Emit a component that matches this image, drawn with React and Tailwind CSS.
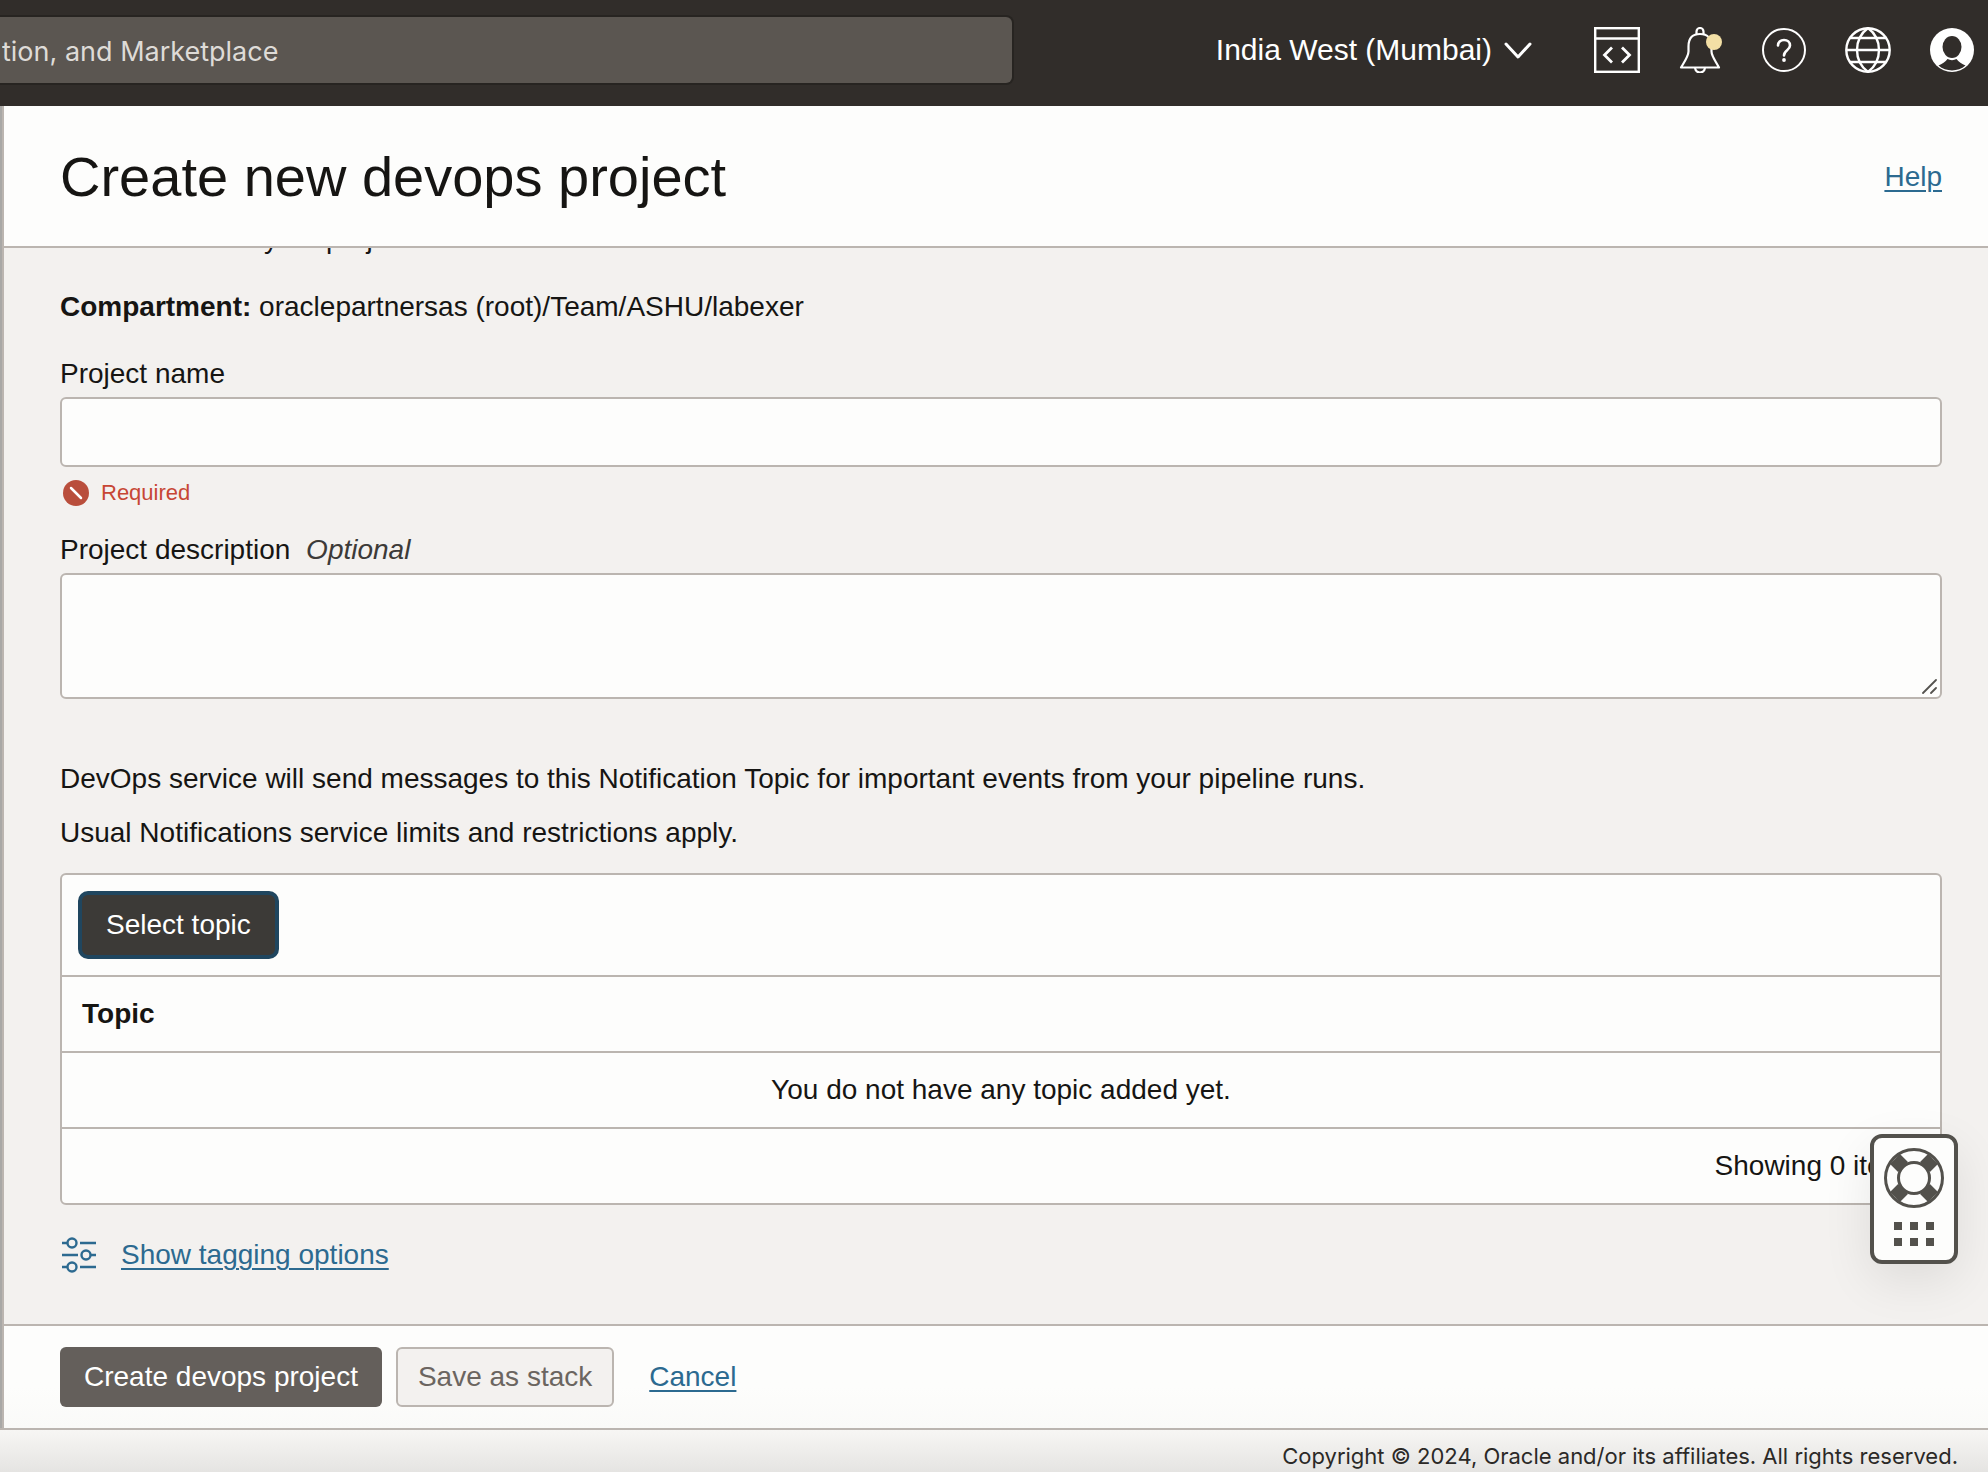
import React from "react";

function CodeIcon() {
  return (
    <svg width="46" height="46" viewBox="0 0 46 46" fill="none" stroke="#fff" strokeWidth="2.4">
      <rect x="1.2" y="1.2" width="43.6" height="43.6" />
      <path d="M1 11.5h44" />
      <path d="M18 20.5l-7.5 7.5 7.5 7.5M28 20.5l7.5 7.5-7.5 7.5" strokeWidth="2.8" />
    </svg>
  );
}

function BellIcon() {
  return (
    <svg width="44" height="46" viewBox="0 0 44 46" fill="none" stroke="#fff" strokeWidth="2.2" strokeLinejoin="round">
      <path d="M9.5 19.5C9.5 10.5 14 7 21 7s11.5 3.5 11.5 12.5v5c0 4.500 4 9.500 7.500 16H2c4-6.500 7.500-11.500 7.500-16z" />
      <path d="M17.5 7V4.500a3.500 3.500 0 0 1 7 0V7M16 41c.5 3 2.500 4.500 5 4.500s4.500-1.500 5-4.500" />
      <circle cx="35" cy="15" r="8" fill="#f3dfa5" stroke="none" />
    </svg>
  );
}

function HelpIcon() {
  return (
    <svg width="44" height="44" viewBox="0 0 44 44" fill="none" stroke="#fff" strokeWidth="2">
      <circle cx="22" cy="22" r="21" />
      <path d="M16 17.5c0-3.500 2.500-5.500 6-5.500s6 2 6 5.500c0 5-6 4.500-6 10" strokeWidth="2.6" strokeLinecap="round" />
      <circle cx="22" cy="32" r="1.9" fill="#fff" stroke="none" />
    </svg>
  );
}

function GlobeIcon() {
  return (
    <svg width="46" height="46" viewBox="0 0 46 46" fill="none" stroke="#fff" strokeWidth="2.4">
      <circle cx="23" cy="23" r="21.7" />
      <path d="M4.500 11h37M1 23h44M4.500 35h37" />
      <path d="M23 1C15 7 12 15 12 23s3 16 11 22c8-6 11-14 11-22S31 7 23 1z" />
    </svg>
  );
}

function UserIcon() {
  return (
    <svg width="44" height="44" viewBox="0 0 44 44">
      <circle cx="22" cy="22" r="22" fill="#fff" />
      <ellipse cx="22" cy="19" rx="9.5" ry="11" fill="#312d2a" />
      <path d="M8.500 37.500c3.500-1.500 7-3.500 9-6.500 2.500 1.500 6.500 1.500 9 0 2 3 5.500 5 9 6.500-7.500 6.500-19.500 6.500-27 0z" fill="#312d2a" />
    </svg>
  );
}

function SlidersIcon() {
  return (
    <svg width="36" height="36" viewBox="0 0 36 36" fill="none" stroke="#2c6a90" strokeWidth="2.4">
      <path d="M1 6h5M19 6h16M1 18h16M30 18h5M1 30h5M19 30h16" />
      <circle cx="11" cy="6" r="4.5" />
      <circle cx="25" cy="18" r="4.5" />
      <circle cx="11" cy="30" r="4.5" />
    </svg>
  );
}

function LifeRing() {
  return (
    <svg width="60" height="60" viewBox="0 0 60 60" fill="none" stroke="#53514c">
      <circle cx="30" cy="30" r="28.5" strokeWidth="3" />
      <circle cx="30" cy="30" r="15.5" strokeWidth="3" />
      <path d="M19 19l-8-8M41 19l8-8M19 41l-8 8M41 41l8 8" strokeWidth="14" />
    </svg>
  );
}

const link = "text-[#2c6a90] underline decoration-2 underline-offset-4";

function TopBar() {
  return (
    <header className="flex h-[106px] items-start justify-between bg-[#312d2a]">
      <input
        aria-label="Search"
        defaultValue="tion, and Marketplace"
        className="mt-[15px] h-[70px] w-[51%] rounded-r-lg border-y-2 border-r-2 border-[#272421] bg-[#5b5651] pt-0.5 pl-0.5 font-['Inter',sans-serif] text-[27px] text-[#dedbd7] outline-none"
      />
      <div className="flex h-[100px] items-center text-white">
        <button className="mr-[62px] flex items-center gap-3 text-[30px]">
          India West (Mumbai)
          <svg width="28" height="18" viewBox="0 0 28 18" fill="none" stroke="#fff" strokeWidth="3" strokeLinecap="round" strokeLinejoin="round">
            <path d="M2 3l12 13L26 3" />
          </svg>
        </button>
        <div className="flex items-center gap-[39px] pr-3.5">
          <button aria-label="Developer tools"><CodeIcon /></button>
          <button aria-label="Notifications"><BellIcon /></button>
          <button aria-label="Help menu"><HelpIcon /></button>
          <button aria-label="Language"><GlobeIcon /></button>
          <button aria-label="Profile"><UserIcon /></button>
        </div>
      </div>
    </header>
  );
}

function TopicTable() {
  return (
    <div className="mt-6 rounded-md border-2 border-[#bbb5b0] bg-[#fdfdfc]">
      <div className="p-4">
        <button className="h-[68px] rounded-[10px] border-4 border-[#20465f] bg-[#3c3a37] px-6 text-white">
          Select topic
        </button>
      </div>
      <table className="w-full">
        <thead>
          <tr className="h-[76px] border-t-2 border-[#bbb5b0]">
            <th className="px-5 text-left font-bold">Topic</th>
          </tr>
        </thead>
        <tbody>
          <tr className="h-[76px] border-t-2 border-[#bbb5b0]">
            <td className="text-center">You do not have any topic added yet.</td>
          </tr>
        </tbody>
        <tfoot>
          <tr className="h-[75px] border-t-2 border-[#bbb5b0]">
            <td className="px-5 text-right">Showing 0 items</td>
          </tr>
        </tfoot>
      </table>
    </div>
  );
}

export default function App() {
  return (
    <div className="relative flex min-h-screen flex-col overflow-hidden bg-[#f3f1ef] font-['Liberation_Sans',Arial,sans-serif] text-[28px] leading-8 text-[#161513]">
      <TopBar />
      <main className="flex flex-col border-l-2 border-[#a9a8a6]">
        <div className="flex flex-col border-l-2 border-[#bbb5b0]">
          <div className="flex h-[142px] items-center justify-between border-b-2 border-[#bbb5b0] bg-[#fdfdfc] pt-0.5 pr-[46px] pl-14">
            <h1 className="text-[56px] leading-none">Create new devops project</h1>
            <a href="#help" className={link}>Help</a>
          </div>
          <form className="flex flex-col pr-[46px] pl-14" onSubmit={(e) => e.preventDefault()}>
            <div className="flex h-[7px] items-end overflow-hidden">
              <p>Enter details for your project</p>
            </div>
            <p className="mt-9"><b>Compartment:</b> oraclepartnersas (root)/Team/ASHU/labexer</p>
            <label htmlFor="name" className="mt-[35px]">Project name</label>
            <input id="name" className="mt-[7px] h-[70px] w-full rounded-md border-2 border-[#bbb5b0] bg-[#fdfdfc] px-4 outline-none" />
            <div className="mt-3 flex items-center gap-3 pl-[3px] text-[22px] leading-7 text-[#c74634]">
              <svg width="26" height="26" viewBox="0 0 26 26">
                <circle cx="13" cy="13" r="13" fill="#b94e3c" />
                <path d="M8 8l10 10" stroke="#fff" strokeWidth="2.5" strokeLinecap="round" />
              </svg>
              Required
            </div>
            <label htmlFor="description" className="mt-[27px]">
              Project description <i className="ml-2 text-[#3c3a38]">Optional</i>
            </label>
            <div className="relative mt-[7px]">
              <textarea id="description" className="block h-[126px] w-full resize-none rounded-md border-2 border-[#bbb5b0] bg-[#fdfdfc] px-4 outline-none" />
              <svg className="absolute right-1 bottom-1" width="16" height="16" viewBox="0 0 16 16" fill="none" stroke="#55534f" strokeWidth="1.8" strokeLinecap="round">
                <path d="M1 14L14 1M9 14l5-5" />
              </svg>
            </div>
            <p className="mt-16">DevOps service will send messages to this Notification Topic for important events from your pipeline runs.</p>
            <p className="mt-[22px]">Usual Notifications service limits and restrictions apply.</p>
            <TopicTable />
            <div className="mt-8 mb-[51px] flex items-center gap-6 pl-px">
              <SlidersIcon />
              <a href="#tagging" className={link}>Show tagging options</a>
            </div>
          </form>
          <div className="flex h-[104px] items-center border-t-2 border-[#bbb5b0] bg-linear-to-b from-[#fdfdfc] from-60% to-[#fafaf8] pl-14">
            <button className="h-[60px] rounded-md bg-[#645f5b] px-6 text-white">Create devops project</button>
            <button className="ml-3.5 h-[60px] rounded-md border-2 border-[#bbb5b0] bg-[#f3f1ef] px-5 text-[#6b6560]">Save as stack</button>
            <a href="#cancel" className={link + " ml-[35px]"}>Cancel</a>
          </div>
        </div>
      </main>
      <footer className="grow border-t-2 border-[#bbb5b0] bg-linear-to-b from-[#f7f6f4] to-[#e5e4e2] pt-3 pr-[30px] text-right font-['Inter',sans-serif] text-[22px] leading-7 text-[#2b2927]">
        Copyright © 2024, Oracle and/or its affiliates. All rights reserved.
      </footer>
      <button
        aria-label="Support"
        className="absolute right-[30px] bottom-[208px] flex h-[130px] w-[88px] flex-col items-center gap-3.5 rounded-xl border-4 border-[#53514c] bg-[#fdfdfc] pt-2.5 shadow-[0_16px_50px_rgba(0,0,0,0.09)]"
      >
        <LifeRing />
        <span className="grid grid-cols-3 gap-2">
          {[0, 1, 2, 3, 4, 5].map((n) => (
            <span key={n} className="size-2 bg-[#53514c]" />
          ))}
        </span>
      </button>
    </div>
  );
}
